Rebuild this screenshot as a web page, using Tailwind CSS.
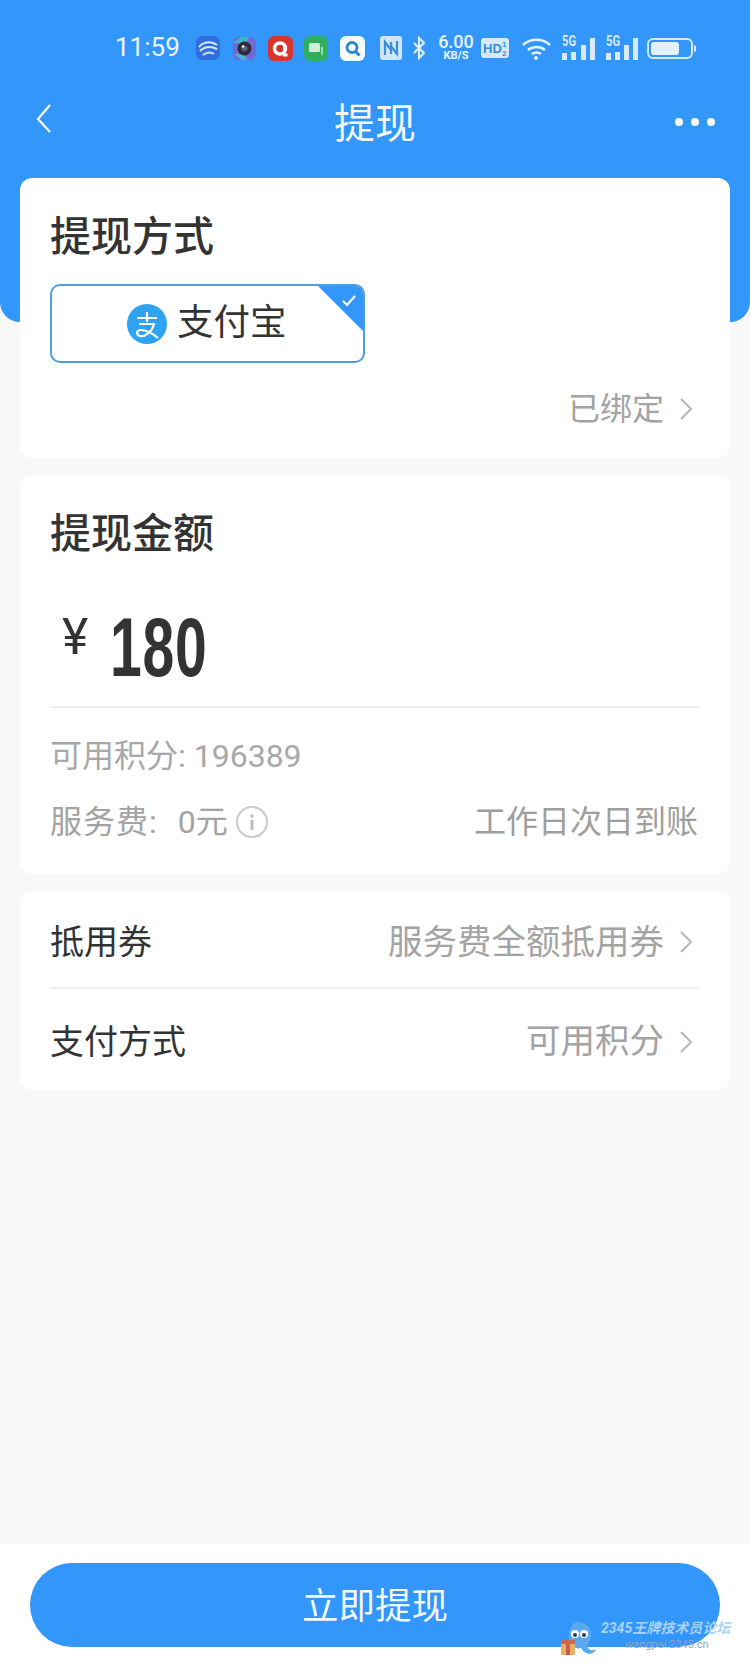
<!DOCTYPE html>
<html lang="zh-CN">
<head>
  <meta charset="UTF-8" />
  <meta name="viewport" content="width=device-width, initial-scale=1.0" />
  <title>提现</title>
  <script src="https://cdn.jsdelivr.net/npm/@tailwindcss/browser@4"></script>
</head>
<body class="bg-[#f8f8f8] font-['Roboto','Noto_Sans_CJK_SC',sans-serif] text-[#333]">
<div class="relative w-[750px] h-[1665px] overflow-hidden flex flex-col">

  <!-- Blue header -->
  <div class="h-[322px] shrink-0 bg-[#3296fa] rounded-b-[20px] text-white">
    <!-- Status bar -->
    <div class="h-[96px] pl-[115px] flex items-center text-white/90">
      <span class="text-[26px] leading-none w-[81px] -mt-[2px]">11:59</span>
      <svg class="w-[24px] h-[24px] mr-[12px]" viewBox="0 0 24 24"><rect width="24" height="24" rx="6" fill="#2f6fe0"/><path d="M3 11c5-6 13-6 18-2M4 15c5-5 11-5 17-2M7 19c4-3 8-3 11-1" stroke="#d8e8ff" stroke-width="2" fill="none"/></svg>
      <svg class="w-[25px] h-[25px] mr-[11px]" viewBox="0 0 25 25"><rect x="1" y="1" width="23" height="23" rx="6" fill="#6f6ad8"/><path d="M1 7l8-6h8l-3 6z" fill="#3db6c8"/><path d="M2 18l8 6h6l-5-6z" fill="#4fb0d8"/><circle cx="12.500" cy="12.500" r="7" fill="#2b2b33"/><circle cx="12.500" cy="12.500" r="3" fill="#55607a"/><circle cx="11" cy="10.500" r="1.300" fill="#fff"/></svg>
      <svg class="w-[25px] h-[25px] mr-[11px]" viewBox="0 0 25 25"><rect width="25" height="25" rx="6" fill="#d8352f"/><circle cx="12" cy="12.500" r="5.500" stroke="#fff" stroke-width="3.500" fill="none"/><path d="M16.500 10v9h3" stroke="#fff" stroke-width="3" fill="none"/></svg>
      <svg class="w-[24px] h-[25px] mr-[12px]" viewBox="0 0 24 25"><rect width="24" height="25" rx="6" fill="#2fae5f"/><rect x="5" y="7" width="11" height="9" rx="1.500" fill="#cfeeda"/><path d="M8 18h9l2 2v-9h-2v7z" fill="#9bdcb2"/></svg>
      <svg class="w-[25px] h-[25px] mr-[15px]" viewBox="0 0 25 25"><rect width="25" height="25" rx="6" fill="#f4fbff"/><circle cx="12" cy="11.500" r="5" stroke="#2a88c8" stroke-width="2.800" fill="none"/><path d="M15.500 15.500l4 4" stroke="#2a88c8" stroke-width="3"/></svg>
      <svg class="w-[22px] h-[24px] mr-[11px]" viewBox="0 0 22 24"><rect width="22" height="24" rx="3" fill="#cfe6fb"/><path d="M5 19V6l6 8V6m0 12V10l6 8V5" stroke="#3a8edc" stroke-width="2.200" fill="none"/></svg>
      <svg class="w-[12px] h-[24px] mr-[13px]" viewBox="0 0 12 24"><path d="M1 7l10 10-5 5V2l5 5L1 17" stroke="#e4f1fd" stroke-width="2" fill="none"/></svg>
      <div class="w-[36px] mr-[7px] flex flex-col items-center leading-none">
        <span class="text-[18px] leading-[15px] font-medium">6.00</span>
        <span class="text-[11px] leading-[12px] font-bold mt-[1px]">KB/S</span>
      </div>
      <svg class="w-[28px] h-[20px] mr-[12px]" viewBox="0 0 28 20"><rect width="28" height="20" rx="3" fill="#d6e9fb"/><text x="2" y="15" font-family="Liberation Sans" font-size="13" font-weight="700" fill="#3a8edc">HD</text><text x="21" y="9" font-family="Liberation Sans" font-size="8" font-weight="700" fill="#3a8edc">1</text><text x="21" y="18" font-family="Liberation Sans" font-size="8" font-weight="700" fill="#3a8edc">2</text></svg>
      <svg class="w-[31px] h-[24px] mr-[10px]" viewBox="0 0 31 24"><path d="M2 9c7-7 20-7 27 0M7 14c5-4 12-4 17 0M11 18c3-2 6-2 9 0" stroke="#e4f1fd" stroke-width="2.600" fill="none"/><circle cx="15" cy="22" r="2" fill="#e4f1fd"/></svg>
      <div class="w-[33px] h-[24px] mr-[11px] relative">
        <div class="absolute inset-0 flex items-end justify-between">
          <span class="w-[5px] h-[7px] bg-[#d8eafc]"></span><span class="w-[5px] h-[8px] bg-[#d8eafc]"></span><span class="w-[5px] h-[15px] bg-[#d8eafc]"></span><span class="w-[5px] h-[22px] bg-[#d8eafc]"></span>
        </div>
        <span class="absolute left-0 top-[-2px] origin-left scale-x-[0.8] text-[14px] font-bold leading-none text-[#d8eafc]">5G</span>
      </div>
      <div class="w-[32px] h-[24px] mr-[9px] relative">
        <div class="absolute inset-0 flex items-end justify-between">
          <span class="w-[5px] h-[7px] bg-[#d8eafc]"></span><span class="w-[5px] h-[8px] bg-[#d8eafc]"></span><span class="w-[5px] h-[15px] bg-[#d8eafc]"></span><span class="w-[5px] h-[22px] bg-[#d8eafc]"></span>
        </div>
        <span class="absolute left-0 top-[-2px] origin-left scale-x-[0.8] text-[14px] font-bold leading-none text-[#d8eafc]">5G</span>
      </div>
      <div class="flex items-center">
        <div class="w-[46px] h-[21px] rounded-[6px] border-2 border-[#d6e9fb] p-[2px]">
          <div class="w-[28px] h-full rounded-[3px] bg-[#e4f1fd]"></div>
        </div>
        <span class="w-[2px] h-[7px] bg-[#d6e9fb] ml-[1px] rounded-r"></span>
      </div>
    </div>

    <!-- Nav bar -->
    <div class="relative h-[56px] flex items-center justify-center">
      <svg class="absolute left-[34px] top-[6px] w-[20px] h-[32px]" viewBox="0 0 20 32"><path d="M16 3L4 17l12 13" stroke="#fff" stroke-width="2.200" fill="none"/></svg>
      <h1 class="text-[41px] leading-none text-white/95">提现</h1>
      <div class="absolute right-[35px] top-[22px] flex gap-[8px]">
        <span class="w-[8px] h-[8px] rounded-full bg-white"></span>
        <span class="w-[8px] h-[8px] rounded-full bg-white"></span>
        <span class="w-[8px] h-[8px] rounded-full bg-white"></span>
      </div>
    </div>
  </div>

  <!-- Cards -->
  <div class="-mt-[144px] px-[20px] relative flex flex-col gap-[17px]">
    <!-- Method -->
    <section class="h-[280px] bg-white rounded-[12px] px-[30px] pt-[38px]">
      <h2 class="text-[41px] leading-[42px] font-medium">提现方式</h2>
      <div class="relative mt-[26px] w-[315px] h-[79px] rounded-[10px] border-2 border-[#4d9fdf] bg-white overflow-hidden flex items-center pl-[75px] gap-[10px]">
        <svg class="w-[40px] h-[40px]" viewBox="0 0 40 40">
          <circle cx="20" cy="20" r="20" fill="#2ea3f2"/>
          <path d="M10 14h20M20 8v10M12 20h15c-2 8-9 13-14 12-4-1-4-6 1-6 5 0 11 3 17 8" stroke="#fff" stroke-width="2.200" fill="none"/>
        </svg>
        <span class="text-[36.500px] leading-none">支付宝</span>
        <div class="absolute right-0 top-0 w-0 h-0 border-t-[45px] border-l-[45px] border-t-[#3296fa] border-l-transparent"></div>
        <svg class="absolute right-[6px] top-[8px] w-[16px] h-[14px]" viewBox="0 0 16 14"><path d="M2 7l4 4 8-9" stroke="#fff" stroke-width="2.200" fill="none"/></svg>
      </div>
      <div class="mt-[26px] flex items-center justify-end gap-[15px] text-[#a3a3a3]">
        <span class="text-[32px] leading-[40px]">已绑定</span>
        <svg class="w-[14px] h-[24px] mr-[7px]" viewBox="0 0 14 24"><path d="M2 2l10 10L2 22" stroke="#b5b5b5" stroke-width="2" fill="none"/></svg>
      </div>
    </section>

    <!-- Amount -->
    <section class="h-[399px] bg-white rounded-[12px] px-[30px] pt-[38px]">
      <h2 class="text-[41px] leading-[42px] font-medium">提现金额</h2>
      <div class="relative h-[153px] border-b-2 border-[#f0f0f0] flex items-start pl-[12px] pt-[53px]">
        <span class="text-[50px] leading-[58px]">¥</span>
        <span class="absolute left-[60px] top-[50px] origin-left scale-x-[0.68] font-['Liberation_Sans'] font-bold text-[84px] leading-[84px] tracking-[1px]">180</span>
      </div>
      <p class="mt-[28px] text-[32px] leading-[40px] text-[#a8a8a8]">可用积分: 196389</p>
      <div class="mt-[26px] flex items-center justify-between text-[32px] leading-[40px] text-[#a3a3a3]">
        <div class="flex items-center">
          <span class="tracking-[1px]">服务费:</span><span class="ml-[20px] mr-[8px]">0元</span>
          <svg class="w-[32px] h-[32px]" viewBox="0 0 32 32"><circle cx="16" cy="16" r="15" stroke="#cfcfcf" stroke-width="2.200" fill="none"/><circle cx="16" cy="10" r="1.800" fill="#bdbdbd"/><path d="M16 14v10" stroke="#bdbdbd" stroke-width="3"/></svg>
        </div>
        <span class="text-[#9e9e9e] mr-[2px]">工作日次日到账</span>
      </div>
    </section>

    <!-- Options -->
    <section class="h-[199px] bg-white rounded-[12px] px-[30px]">
      <div class="h-[98px] pt-[6px] border-b-2 border-[#f0f0f0] flex items-center justify-between">
        <span class="text-[34px] leading-none">抵用券</span>
        <div class="flex items-center gap-[15px] text-[#a3a3a3]">
          <span class="text-[34.500px] leading-none">服务费全额抵用券</span>
          <svg class="w-[14px] h-[24px] mr-[7px]" viewBox="0 0 14 24"><path d="M2 2l10 10L2 22" stroke="#b5b5b5" stroke-width="2" fill="none"/></svg>
        </div>
      </div>
      <div class="h-[99px] pt-[6px] flex items-center justify-between">
        <span class="text-[34px] leading-none">支付方式</span>
        <div class="flex items-center gap-[15px] text-[#a3a3a3]">
          <span class="text-[34.500px] leading-none">可用积分</span>
          <svg class="w-[14px] h-[24px] mr-[7px]" viewBox="0 0 14 24"><path d="M2 2l10 10L2 22" stroke="#b5b5b5" stroke-width="2" fill="none"/></svg>
        </div>
      </div>
    </section>
  </div>

  <!-- Footer button -->
  <div class="mt-auto h-[121px] bg-white pt-[19px] px-[30px]">
    <button class="w-full h-[84px] pt-[5px] rounded-full bg-[#3296fa] text-white/95 text-[36.500px] leading-none">立即提现</button>
  </div>

  <!-- Watermark -->
  <div class="absolute left-[560px] top-[1618px] w-[190px] h-[40px]">
    <svg class="absolute left-0 top-0 w-[44px] h-[42px]" viewBox="0 0 44 42">
      <path d="M18 4c8 0 13 6 13 13 0 6-3 9-4 11 2 5 6 5 9 3-1 4-6 6-10 4-2-1-4-3-5-5-3 1-6 0-8-2-4-4-5-9-4-13 1-6 4-11 9-11z" fill="#5aa8f0"/>
      <circle cx="15" cy="16" r="4" fill="#fff"/><circle cx="24" cy="16" r="4" fill="#fff"/>
      <circle cx="15" cy="17" r="2" fill="#17406e"/><circle cx="24" cy="17" r="2" fill="#17406e"/>
      <rect x="1" y="22" width="14" height="15" rx="1" fill="#e3b267"/><rect x="6" y="22" width="4" height="15" fill="#d2574c"/><rect x="1" y="22" width="14" height="4" fill="#c96a4f"/>
    </svg>
    <span class="absolute left-[41px] top-[1px] italic font-bold text-[14px] leading-[18px] whitespace-nowrap text-[#a9d2fb]">2345王牌技术员论坛</span>
    <span class="absolute left-[65px] top-[20px] text-[11px] leading-[14px] whitespace-nowrap text-[#8aa5c4]">wangpai.2345.cn</span>
  </div>
</div>
</body>
</html>
